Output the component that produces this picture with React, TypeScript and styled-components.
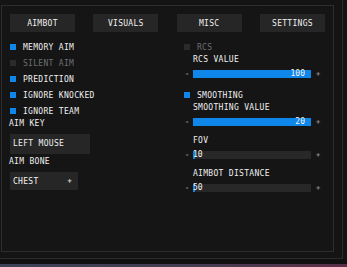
import styled, { createGlobalStyle } from 'styled-components';

const GlobalStyle = createGlobalStyle`
  html, body {
    margin: 0;
    padding: 0;
    background: #141414;
    overflow: hidden;
  }
  body {
    font-family: "DejaVu Sans Mono", "Liberation Mono", monospace;
    font-size: 8px;
    color: #f0f0f0;
    text-transform: uppercase;
  }
`;

const Window = styled.div`
  width: 343px;
  height: 259px;
  box-sizing: border-box;
  border-right: 1px solid #2b2b2b;
  border-bottom: 1px solid #2b2b2b;
  padding-top: 5px;
  padding-left: 1px;
`;

const Panel = styled.div`
  width: 333px;
  height: 247px;
  box-sizing: border-box;
  border: 1px solid #2d2d2d;
  background: #151515;
  padding: 8px 8px 0 8px;
`;

const TabBar = styled.div`
  display: flex;
  justify-content: space-between;
`;

const Tab = styled.div`
  width: 65px;
  height: 18px;
  background: #262626;
  display: flex;
  align-items: center;
  justify-content: center;
  letter-spacing: 0.3px;
  color: #f0f0f0;
`;

const Columns = styled.div`
  display: grid;
  grid-template-columns: 174px 1fr;
  margin-top: 7px;
`;

const Column = styled.div`
  display: flex;
  flex-direction: column;
`;

const CheckRow = styled.div<{ $disabled?: boolean }>`
  height: 16px;
  display: flex;
  align-items: center;
  gap: 7px;
  color: ${(p) => (p.$disabled ? '#6b6f74' : '#f0f0f0')};
  letter-spacing: 0.3px;
`;

const Box = styled.span<{ $on?: boolean }>`
  width: 6px;
  height: 6px;
  background: ${(p) => (p.$on ? '#0f86ea' : '#2b2b2b')};
`;

const FieldLabel = styled.div<{ $top?: number; $indent?: number }>`
  height: 10px;
  line-height: 10px;
  margin-top: ${(p) => p.$top ?? 0}px;
  margin-left: ${(p) => p.$indent ?? -1}px;
  letter-spacing: 0.3px;
`;

const TextBox = styled.div`
  margin-top: 5px;
  width: 80px;
  height: 20px;
  background: #262626;
  line-height: 20px;
  padding-left: 3px;
  box-sizing: border-box;
  letter-spacing: 0.3px;
`;

const Select = styled.div`
  margin-top: 5px;
  width: 68px;
  height: 18px;
  background: #262626;
  display: flex;
  align-items: center;
  justify-content: space-between;
  padding: 0 6px 0 3px;
  box-sizing: border-box;
  letter-spacing: 0.3px;
`;

const Caret = styled.span`
  font-size: 7px;
  font-weight: bold;
  color: #d8d8d8;
`;

const SliderGroup = styled.div<{ $gap: number }>`
  margin-bottom: ${(p) => p.$gap}px;
`;

const SliderRow = styled.div`
  display: flex;
  align-items: center;
  height: 8px;
  margin-top: 5px;
`;

const Step = styled.span`
  width: 9px;
  padding-left: 1px;
  box-sizing: border-box;
  color: #8c8c8c;
  font-weight: bold;
  font-size: 7px;
`;

const Track = styled.div`
  position: relative;
  width: 118px;
  height: 8px;
  background: #282828;
  margin-right: 4px;
`;

const Fill = styled.div`
  height: 100%;
  background: #0f86ea;
`;

const Value = styled.span<{ $end?: boolean }>`
  position: absolute;
  top: 0;
  line-height: 8px;
  color: #f4f4f4;
  ${(p) => (p.$end ? 'right: 6px;' : 'left: 0;')}
`;

const Strip = styled.div`
  height: 8px;
  background: linear-gradient(180deg, #111 0 5px, transparent 5px),
    linear-gradient(90deg, #3c4357, #463c52 60%, #5a2f46);
`;

type SliderProps = { label: string; value: number; pct: number; gap: number };

function Slider({ label, value, pct, gap }: SliderProps) {
  const full = pct > 30;
  return (
    <SliderGroup $gap={gap}>
      <FieldLabel $indent={9}>{label}</FieldLabel>
      <SliderRow>
        <Step>-</Step>
        <Track>
          <Fill style={{ width: full ? `${pct}%` : '2px' }} />
          <Value $end={full}>{value}</Value>
        </Track>
        <Step>+</Step>
      </SliderRow>
    </SliderGroup>
  );
}

function Check({ label, on, disabled }: { label: string; on?: boolean; disabled?: boolean }) {
  return (
    <CheckRow $disabled={disabled}>
      <Box $on={on} />
      {label}
    </CheckRow>
  );
}

export default function App() {
  return (
    <>
      <GlobalStyle />
      <Window>
        <Panel>
          <TabBar>
            <Tab>Aimbot</Tab>
            <Tab>Visuals</Tab>
            <Tab>Misc</Tab>
            <Tab>Settings</Tab>
          </TabBar>
          <Columns>
            <Column>
              <Check label="Memory Aim" on />
              <Check label="Silent Aim" disabled />
              <Check label="Prediction" on />
              <Check label="Ignore Knocked" on />
              <Check label="Ignore Team" on />
              <FieldLabel>Aim Key</FieldLabel>
              <TextBox>Left Mouse</TextBox>
              <FieldLabel $top={3}>Aim Bone</FieldLabel>
              <Select>
                Chest
                <Caret>+</Caret>
              </Select>
            </Column>
            <Column>
              <Check label="RCS" disabled />
              <Slider label="RCS Value" value={100} pct={100} gap={9} />
              <Check label="Smoothing" on />
              <Slider label="Smoothing Value" value={20} pct={100} gap={10} />
              <Slider label="FOV" value={10} pct={0} gap={10} />
              <Slider label="Aimbot Distance" value={50} pct={0} gap={0} />
            </Column>
          </Columns>
        </Panel>
      </Window>
      <Strip />
    </>
  );
}
